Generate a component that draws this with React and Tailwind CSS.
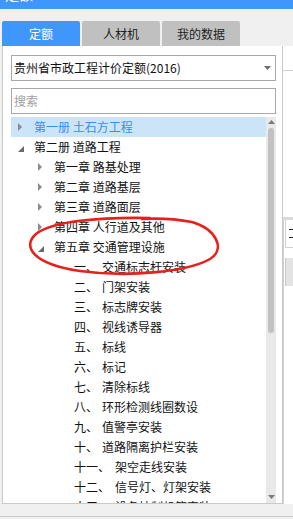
import React from 'react';

const font = { fontFamily: '"Noto Sans CJK SC", "Noto Sans", sans-serif' };

const treeItems = [
  { level: 0, label: '第一册 土石方工程', state: 'closed', selected: true },
  { level: 0, label: '第二册 道路工程', state: 'open' },
  { level: 1, label: '第一章 路基处理', state: 'closed' },
  { level: 1, label: '第二章 道路基层', state: 'closed' },
  { level: 1, label: '第三章 道路面层', state: 'closed' },
  { level: 1, label: '第四章 人行道及其他', state: 'closed' },
  { level: 1, label: '第五章 交通管理设施', state: 'open' },
  { level: 2, no: '一、', label: '交通标志杆安装' },
  { level: 2, no: '二、', label: '门架安装' },
  { level: 2, no: '三、', label: '标志牌安装' },
  { level: 2, no: '四、', label: '视线诱导器' },
  { level: 2, no: '五、', label: '标线' },
  { level: 2, no: '六、', label: '标记' },
  { level: 2, no: '七、', label: '清除标线' },
  { level: 2, no: '八、', label: '环形检测线圈数设' },
  { level: 2, no: '九、', label: '值警亭安装' },
  { level: 2, no: '十、', label: '道路隔离护栏安装' },
  { level: 2, no: '十一、', label: '架空走线安装' },
  { level: 2, no: '十二、', label: '信号灯、灯架安装' },
  { level: 2, no: '十三、', label: '设备控制机箱安装' },
];

// 树节点前面的小三角
const Arrow = ({ state }) => {
  if (state === 'open') {
    return (
      <svg width="6" height="6" viewBox="0 0 6 6" className="mt-[3px]">
        <polygon points="6,0 6,6 0,6" fill="#6b6b6b" />
      </svg>
    );
  }
  if (state === 'closed') {
    return (
      <svg width="4" height="8" viewBox="0 0 4 8">
        <polygon points="0,0 4,4 0,8" fill="#8a8a8a" />
      </svg>
    );
  }
  return null;
};

const TreeRow = ({ item }) => {
  const indent = ['pl-[7px]', 'pl-[27px]', 'pl-[47px]'][item.level];
  return (
    <div
      className={`flex items-center h-[20px] shrink-0 whitespace-nowrap ${indent} ${
        item.selected ? 'bg-[#cce4f7] text-[#3a8ee6]' : 'text-[#111]'
      }`}
    >
      <div className="w-[16px] flex items-center">
        <Arrow state={item.state} />
      </div>
      {item.no ? (
        <>
          <span className={item.no.length > 2 ? 'w-[41px]' : 'w-[28px]'}>{item.no}</span>
          <span>{item.label}</span>
        </>
      ) : (
        <span>{item.label}</span>
      )}
    </div>
  );
};

export default function App() {
  return (
    <div
      className="relative w-[293px] h-[519px] overflow-hidden bg-[#f0f0f0] flex flex-col text-[12px]"
      style={font}
    >
      {/* 标题栏 */}
      <div className="h-[9px] bg-[#3f97fb] overflow-hidden shrink-0">
        <div className="pl-[5px] -mt-[16px] text-white text-[14px] leading-[20px]">定额</div>
      </div>

      {/* 标签页 */}
      <div className="flex gap-[2px] pl-[2px] mt-[12px] h-[25px] shrink-0">
        <div className="w-[78px] rounded-t-[2px] bg-[#3f97fb] text-white flex items-center justify-center">
          定额
        </div>
        <div className="w-[78px] rounded-t-[2px] bg-[#c0c0c0] text-[#222] flex items-center justify-center">
          人材机
        </div>
        <div className="w-[78px] rounded-t-[2px] bg-[#c0c0c0] text-[#222] flex items-center justify-center">
          我的数据
        </div>
      </div>

      <div className="flex h-[458px] shrink-0 pl-[2px]">
        {/* 左侧面板 */}
        <div className="w-[283px] bg-white border-l border-r border-b border-[#c9c9c9] pl-[8px] pr-[6px] pt-[9px] flex flex-col">
          <div className="h-[26px] border border-[#a8a8a8] flex items-center justify-between pl-[2px] pr-[4px] shrink-0">
            <span className="text-[#111]">贵州省市政工程计价定额(2016)</span>
            <svg width="7" height="4" viewBox="0 0 7 4">
              <polygon points="0,0 7,0 3.5,4" fill="#6e6e6e" />
            </svg>
          </div>
          <div className="h-[26px] mt-[7px] border border-[#a8a8a8] flex items-center pl-[2px] text-[#a0a0a0] shrink-0">
            搜索
          </div>
          <div className="flex flex-1 mt-[3px] min-h-0">
            <div className="flex-1 flex flex-col overflow-hidden">
              {treeItems.map((item, i) => (
                <TreeRow key={i} item={item} />
              ))}
            </div>
            {/* 滚动条 */}
            <div className="w-[10px] bg-[#e9e9e9] flex flex-col items-center">
              <svg width="7" height="4" viewBox="0 0 7 4" className="mt-[3px]">
                <polygon points="0,4 7,4 3.5,0" fill="#7a7a7a" />
              </svg>
              <div className="w-[6px] h-[205px] mt-[4px] rounded-[3px] bg-[#c1c1c1]" />
              <div className="flex-1" />
              <svg width="7" height="4" viewBox="0 0 7 4" className="mb-[4px]">
                <polygon points="0,0 7,0 3.5,4" fill="#7a7a7a" />
              </svg>
            </div>
          </div>
        </div>

        {/* 右侧被遮挡的面板 */}
        <div className="flex-1 bg-white flex flex-col">
          <div className="h-[25px] border-b border-[#d0d0d0]" />
          <div className="h-[146px]" />
          <div className="h-[3px] bg-[#d9d9d9]" />
          <div className="flex-1 border-l border-[#d0d0d0] flex flex-col">
            <div className="h-[28px] ml-[1px] border-l border-b border-[#d0d0d0] flex flex-col justify-center gap-[7px] pl-[3px]">
              <div className="h-[1px] w-[4px] bg-[#222]" />
              <div className="h-[1px] w-[4px] bg-[#222]" />
            </div>
            <div className="h-[10px]" />
            <div className="h-[28px] ml-[1px] bg-[#e3e3e3] border-l border-[#c9c9c9]" />
          </div>
        </div>
      </div>

      {/* 底部 */}
      <div className="h-[12px] shrink-0" />
      <div className="h-[1px] bg-[#c9c9c9] shrink-0" />

      {/* 红色标注圈 */}
      <svg
        className="absolute left-0 top-0 pointer-events-none"
        width="293"
        height="519"
        viewBox="0 0 293 519"
      >
        <path
          d="M150,218 C100,217 52,221 36,234 C22,246 32,264 80,271 C130,278 190,271 210,259 C226,249 216,229 192,222 C176,219 160,218 142,219"
          fill="none"
          stroke="#e8201c"
          strokeWidth="2.6"
          strokeLinecap="round"
        />
      </svg>
    </div>
  );
}
